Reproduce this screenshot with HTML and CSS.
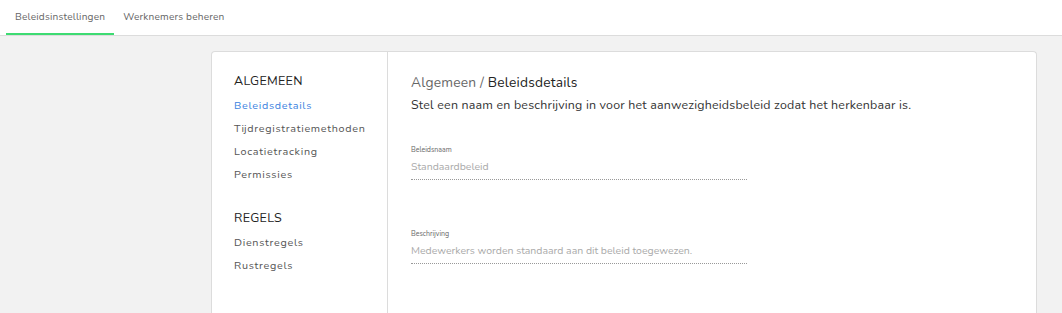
FILE: index.html
```html
<!DOCTYPE html>
<html lang="nl">
<head>
<meta charset="utf-8">
<title>Beleidsinstellingen</title>
<link rel="stylesheet" href="styles.css">
</head>
<body>
<header class="tabs">
  <div class="tab active">Beleidsinstellingen</div>
  <div class="tab">Werknemers beheren</div>
</header>
<main class="page">
  <section class="card">
    <nav class="side">
      <div class="group">
        <h3 class="group-title">ALGEMEEN</h3>
        <a class="item current">Beleidsdetails</a>
        <a class="item">Tijdregistratiemethoden</a>
        <a class="item">Locatietracking</a>
        <a class="item">Permissies</a>
      </div>
      <div class="group">
        <h3 class="group-title">REGELS</h3>
        <a class="item">Dienstregels</a>
        <a class="item">Rustregels</a>
      </div>
    </nav>
    <div class="content">
      <h2 class="crumb"><span class="crumb-parent">Algemeen / </span>Beleidsdetails</h2>
      <p class="intro">Stel een naam en beschrijving in voor het aanwezigheidsbeleid zodat het herkenbaar is.</p>
      <div class="field">
        <label class="label">Beleidsnaam</label>
        <div class="value">Standaardbeleid</div>
      </div>
      <div class="field">
        <label class="label">Beschrijving</label>
        <div class="value">Medewerkers worden standaard aan dit beleid toegewezen.</div>
      </div>
    </div>
  </section>
</main>
</body>
</html>
```

FILE: styles.css
```css
* { box-sizing: border-box; }
html, body { margin: 0; padding: 0; height: 100%; }
body {
  font-family: "Nunito", Lato, "Noto Sans", sans-serif;
  background: #f2f2f2;
  color: #333;
  overflow: hidden;
  display: flex;
  flex-direction: column;
}
.tabs {
  display: flex;
  flex: none;
  background: #fff;
  height: 36px;
  border-bottom: 1px solid #dcdcdc;
  padding-left: 6px;
}
.tab {
  font-size: 10.1px;
  color: #666;
  padding: 0 9px;
  line-height: 34px;
  height: 35px;
  letter-spacing: 0.2px;
}
.tab.active {
  border-bottom: 2px solid #3ddb72;
}
.page {
  flex: 1;
  display: flex;
  padding: 15px 25px 0 211px;
  min-height: 0;
}
.card {
  flex: 1;
  display: flex;
  background: #fff;
  border: 1px solid #dcdcdc;
  border-bottom: none;
  border-radius: 4px 4px 0 0;
}
.side {
  width: 176px;
  border-right: 1px solid #dcdcdc;
  padding: 20px 0 0 22px;
}
.group { margin-bottom: 23px; }
.group-title {
  margin: 0 0 4px;
  font-weight: 400;
  font-size: 12.5px;
  color: #222;
  letter-spacing: 0.3px;
  line-height: 18px;
}
.item {
  display: block;
  font-size: 10.8px;
  color: #555;
  letter-spacing: 0.7px;
  line-height: 23px;
}
.item.current { color: #3b82e0; }
.content {
  flex: 1;
  padding: 21px 23px 0 23px;
}
.crumb {
  margin: 0;
  font-weight: 400;
  font-size: 13.75px;
  color: #222;
  line-height: 20px;
  letter-spacing: 0.2px;
}
.crumb-parent { color: #666; }
.intro {
  margin: 3px 0 0;
  font-size: 12.4px;
  color: #333;
  line-height: 18px;
  letter-spacing: 0.2px;
}
.field {
  width: 336px;
  margin-top: 31px;
}
.field + .field { margin-top: 49px; }
.label {
  display: block;
  font-size: 7px;
  color: #666;
  line-height: 10px;
}
.value {
  font-size: 10.5px;
  color: #aaa;
  line-height: 17px;
  padding: 3px 0 4px;
  border-bottom: 1px dotted #999;
}
```
